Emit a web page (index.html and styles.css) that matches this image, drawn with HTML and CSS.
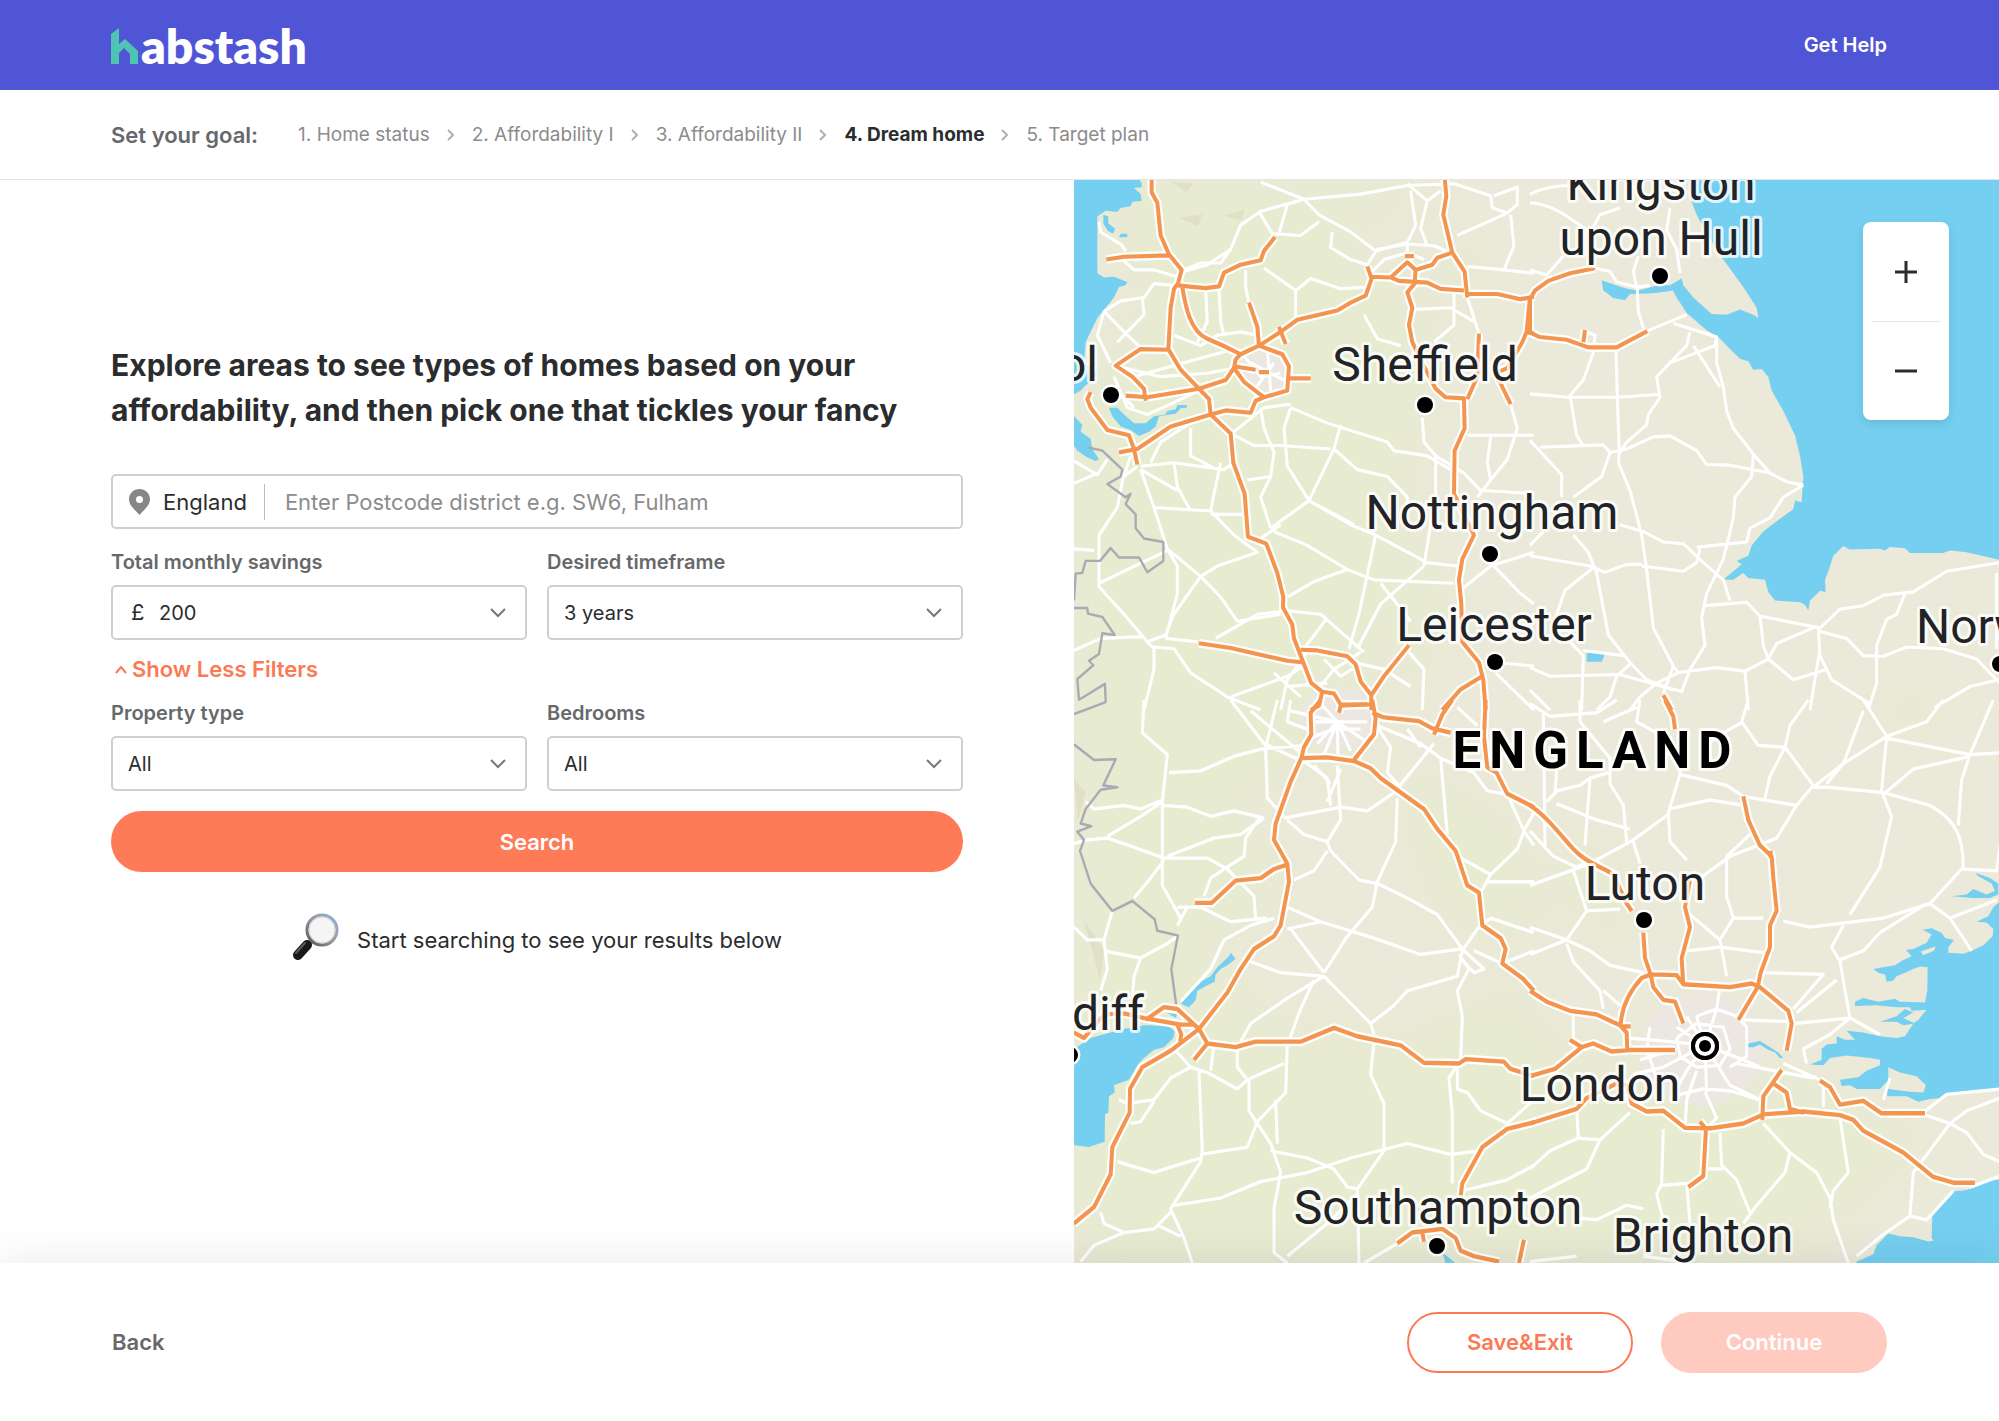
FILE: index.html
```html
<!DOCTYPE html>
<html lang="en">
<head>
	<meta charset="UTF-8">
	<meta name="viewport" content="width=device-width, initial-scale=1.0">
	<title>Habstash - Dream home</title>
	<link rel="stylesheet" href="styles.css">
</head>
<body>
	<header class="header">
		<a href="#" class="logo">
			<svg class="logo-mark" viewBox="0 0 27 36" aria-hidden="true"><path d="M0 6 8 0V16L14 11 27 23V36H19V26L13 20 8 25V36H0Z"/></svg>
			<span>abstash</span>
		</a>
		<a href="#" class="help-link">Get Help</a>
	</header>

	<nav class="steps">
		<span class="steps-title">Set your goal:</span>
		<ol class="steps-list">
			<li><a href="#">1. Home status</a></li>
			<li><svg class="step-arrow" viewBox="0 0 8 14"><path d="M1 2 6 7 1 12"/></svg><a href="#">2. Affordability I</a></li>
			<li><svg class="step-arrow" viewBox="0 0 8 14"><path d="M1 2 6 7 1 12"/></svg><a href="#">3. Affordability II</a></li>
			<li><svg class="step-arrow" viewBox="0 0 8 14"><path d="M1 2 6 7 1 12"/></svg><a href="#" class="active">4. Dream home</a></li>
			<li><svg class="step-arrow" viewBox="0 0 8 14"><path d="M1 2 6 7 1 12"/></svg><a href="#">5. Target plan</a></li>
		</ol>
	</nav>

	<main class="content">
		<section class="search-panel">
			<h1>Explore areas to see types of homes based on your affordability, and then pick one that tickles your fancy</h1>
			<form class="search-form">
				<div class="postcode-box">
					<svg class="pin-icon" viewBox="0 0 21 26"><path fill-rule="evenodd" d="M10.500 0C4.500 0 0 4.500 0 10.300 0 17 6.500 21 10.500 26 14.500 21 21 17 21 10.300 21 4.500 16.500 0 10.500 0ZM10.500 7a3.500 3.500 0 1 1 0 7 3.500 3.500 0 0 1 0-7Z"/></svg>
					<label for="postcode">England</label>
					<input type="text" id="postcode" placeholder="Enter Postcode district e.g. SW6, Fulham">
				</div>

				<div class="field-row">
					<div class="field">
						<label for="savings">Total monthly savings</label>
						<div class="select-box">
							<span class="currency">£</span>
							<select id="savings" class="with-currency"><option>200</option><option>400</option></select>
							<svg class="chevron" viewBox="0 0 16 10"><path d="M1 1 8 8 15 1"/></svg>
						</div>
					</div>
					<div class="field">
						<label for="timeframe">Desired timeframe</label>
						<div class="select-box">
							<select id="timeframe"><option>3 years</option><option>5 years</option></select>
							<svg class="chevron" viewBox="0 0 16 10"><path d="M1 1 8 8 15 1"/></svg>
						</div>
					</div>
				</div>

				<button type="button" class="filter-toggle" id="filter-toggle">
					<svg viewBox="0 0 12 8"><path d="M1 7 6 1 11 7"/></svg>
					<span>Show Less Filters</span>
				</button>

				<div class="field-row">
					<div class="field">
						<label for="property">Property type</label>
						<div class="select-box">
							<select id="property"><option>All</option><option>House</option><option>Flat</option></select>
							<svg class="chevron" viewBox="0 0 16 10"><path d="M1 1 8 8 15 1"/></svg>
						</div>
					</div>
					<div class="field">
						<label for="bedrooms">Bedrooms</label>
						<div class="select-box">
							<select id="bedrooms"><option>All</option><option>1</option><option>2</option></select>
							<svg class="chevron" viewBox="0 0 16 10"><path d="M1 1 8 8 15 1"/></svg>
						</div>
					</div>
				</div>

				<button type="button" class="btn btn-search">Search</button>
			</form>

			<div class="results-hint">
				<svg class="magnifier" viewBox="0 0 48 48">
					<defs>
						<linearGradient id="rim" x1="0" y1="1" x2="1" y2="0"><stop offset="0" stop-color="#555"/><stop offset=".5" stop-color="#98989c"/><stop offset="1" stop-color="#8fb2dc"/></linearGradient>
					</defs>
					<path d="M21 27 17 31" stroke="#8d8d90" stroke-width="5"/>
					<path d="M15 32 6 42" stroke="#17191b" stroke-width="10" stroke-linecap="round"/>
					<path d="M13 30 4 40" stroke="#555b60" stroke-width="2" stroke-linecap="round"/>
					<circle cx="30" cy="17" r="15" fill="#f5f5f6" stroke="url(#rim)" stroke-width="3"/>
					<circle cx="30" cy="17" r="13" fill="none" stroke="#d4d4d8" stroke-width="1"/>
				</svg>
				<p>Start searching to see your results below</p>
			</div>
		</section>

		<section class="map">
			<svg class="map-canvas" viewBox="0 0 925 1083" preserveAspectRatio="xMinYMin slice" role="img" aria-label="Map of England">
				<defs>
					<filter id="soft"><feGaussianBlur stdDeviation="22"/></filter>
					<!-- the four map tiles: water, borders and roads -->
					<g id="water-nw">
						<path d="M0 20H190L203 38V50L180 52 200 70 203 90 175 92 170 105 140 110 130 122 95 118 85 125 70 135V300L90 312 120 310 160 325 155 335 135 340 120 370 95 400 70 430 50 470 35 500 30 560 70 590 60 610 35 625 20 640 0 652Z"/>
						<path d="M105 690H130L150 710 180 735 215 735 240 715 275 710 280 700 305 695 310 682H340L338 690 320 692 305 708 275 712 255 715 245 745 225 760 195 772 170 755 140 745 115 715Z"/>
						<path d="M0 715 25 740 20 760 50 780 55 810 75 840 65 845 40 835 10 815 0 800ZM88 130 103 135V155L123 170 118 185 103 178 88 155ZM140 185H160V195H135Z"/>
					</g>
					<g id="water-ne">
						<path d="M475 20 480 80 500 130 540 200 580 260 640 340 680 400 685 430 670 420 630 405 590 420 545 418 490 370 460 335 455 315 420 335 440 370 470 415 530 465 565 485 600 520 630 548 655 555 670 580 695 578 715 600 725 640 760 700 795 770 810 830 820 890 818 915 815 965 795 960 790 985 740 1020 700 1050 665 1090 655 1120 620 1135 635 1145 580 1190H610L640 1170 655 1185 705 1190 715 1225 735 1250 810 1255 825 1262 835 1278 840 1250 870 1222 887 1225 885 1190 895 1165 910 1120 940 1092 960 1102 1050 1100 1065 1105 1080 1095 1125 1098 1140 1112H1240L1260 1105 1310 1110 1410 1132V20Z"/>
						<path d="M215 320 245 330 290 345 325 350 385 335 420 335 430 350 370 358 300 360 285 378 250 372 220 350ZM170 1402 225 1405 215 1428H170Z"/>
					</g>
					<g id="water-sw">
						<path d="M0 960 50 930 95 918 150 905 210 895 285 897 302 912 298 930 270 955 240 962 210 985 190 1005 165 1045 120 1060 122 1080 105 1090 103 1135 93 1140 92 1215 45 1230 0 1225Z"/>
						<path d="M320 830 345 800 380 775 410 760 430 735 465 705 470 695 485 712 460 730 440 740 425 755 422 775 400 785 370 800 365 825 345 845 325 838ZM280 862 310 864 305 874ZM1105 1520 1120 1530 1145 1550H1115Z"/>
					</g>
					<g id="water-se">
						<path d="M1410 555 1390 570 1375 595 1340 610 1370 612 1390 630 1388 650 1360 675 1325 690 1300 698 1255 695V680L1272 660 1245 655 1235 640 1205 628 1178 632 1205 645 1190 668 1150 685 1128 688 1145 705 1120 715 1095 730 1030 740 1045 750 1065 755 1070 775 1090 772 1100 760 1125 750 1150 740 1170 733 1193 735 1192 800 1185 832 1110 830 1095 822 1045 830 1000 820 975 830V842L1040 840 1100 845 1140 845 1145 855 1190 852 1165 880 1150 890 1125 925 1100 930 1050 925 1000 915 950 910 975 935 945 935 920 925V945L890 948 875 960V990L840 1003 880 1005 900 985 950 978 1020 985 1050 990V1005L1010 1020 985 1038 930 1045 935 1062 960 1060 980 1070H1050L1070 1050 1072 1090 1130 1090 1165 1105 1200 1098 1235 1095 1250 1082 1300 1080 1410 1068Z"/>
						<path d="M1335 475 1380 490 1405 505V535L1380 545H1330L1265 540 1310 535 1330 520 1370 535 1395 525 1385 505 1345 485ZM1050 885 1100 870 1125 850 1150 860 1120 875 1155 890 1120 895 1100 885ZM655 945 690 938 720 955 745 970 760 985H750L735 970 710 960 690 948 670 955H655Z"/>
						<path d="M1410 1320 1370 1322 1350 1335 1310 1348 1270 1352 1230 1395 1207 1420 1205 1480 1212 1487 1195 1490 1150 1478 1110 1475 1075 1468 1040 1500 1030 1525 980 1545V1560H1410Z"/>
						<path class="land" d="M1075 1010 1110 1025 1160 1035 1188 1060 1180 1080 1140 1078 1075 1070ZM1172 692 1217 678 1212 690 1180 702Z"/>
					</g>
					<g id="minor-nw">
						<path d="M560 35 690 85 735 130 830 180 905 235 1000 210M690 85 560 120 500 160 470 230 400 275 330 295M690 85 860 70 1000 45 1140 40 1250 75 1255 110 1300 125 1330 100V50L1260 75M555 120 595 185 680 190 735 150M690 85 640 100 615 185M1000 40 1060 90 1100 60M1010 60 1025 160 1000 210 1000 260M1300 125 1150 190M1310 130 1320 220 1290 290 1180 280M1290 290 1380 300M1060 90 1040 170 1060 220M775 180 770 225 830 260 880 275 910 230 1000 215 1080 220 1130 240M890 300 930 260 1000 240 1050 260"/>
						<path d="M75 150 80 180 140 215 155 235M145 260 180 290 240 290 310 310M330 290 380 270 440 270 470 230M570 285 665 350 710 315 800 345 880 340M665 350V430M515 290V340L525 385M435 345 440 440 450 480M395 345 400 440 370 500M90 410 140 380 210 370 240 330 300 335M90 410 150 470 205 520M90 410 70 480 110 560M205 370 210 420 130 500M130 570 260 600 400 590 480 575M180 600 330 560 480 520M120 600 160 690 220 710 290 680 375 640M130 640 180 690M300 480 380 510 430 480 500 470 550 480"/>
						<path d="M510 540 560 600 620 590M500 590 540 640 600 560M580 520 590 640M530 560 630 610M650 690 760 735 940 790 960 815 1060 830 1130 870M650 680 570 690 480 760M800 740 780 810 705 960 590 1040M780 810 850 870 940 890 1000 950V1000M650 690 630 750 640 860 705 960 830 1030 905 1060 1060 1140 1150 1150M705 960 840 1030M1045 720 1050 790 1085 830V940L1050 1150M480 770 540 800 620 800 770 810M560 690 570 750 600 820 590 890 560 950 590 1040M520 900 590 890"/>
						<path d="M200 860 300 850 450 870 480 850M200 870 240 980 410 990 420 940 440 850M300 850 310 920 350 990M230 850 260 790 340 740M350 750V830L430 870M200 870 310 930M130 980 75 1060V1210L150 1290 220 1370 240 1390V1450L210 1568M410 990 480 1060 550 1110 430 1150 380 1180 300 1290 275 1350 220 1370M410 1000H520M240 980 280 1100 310 1150V1230L275 1360M280 1100 380 1180 440 1240 490 1310 620 1290M75 1200 160 1160 280 1105M0 1100 60 1105M0 1395 80 1360 210 1355M240 1385 300 1390 350 1460 460 1530 560 1568M275 1360 370 1370M150 880 130 980M170 830 150 890 190 860"/>
						<path d="M425 1360 550 1290 640 1280 740 1290 870 1400M600 1050 700 1090 820 1160 900 1190 1140 1200M560 1070 620 1030M640 1240 720 1195 820 1160M905 1060 855 1290 825 1390M1050 1150 920 1260 850 1390M920 1200 1010 1310M690 1390 760 1300M0 845 70 885 100 840M0 910 70 880M1085 830 1170 880 1220 930 1380 940M1180 770H1380M1250 775 1240 850 1250 900 1210 950M1310 680 1330 750 1300 840 1250 900M1250 1150 1380 1110M1250 1150 1160 1220M1260 1150 1340 1230 1380 1260M1265 1460 1380 1568M1265 1430 1380 1440M870 420 910 490 980 510M1015 405 1130 400 1200 440M1140 350V450L1080 500M1180 370 1215 475"/>
						<path d="M470 1530 640 1470 690 1440M1005 1400 1050 1450 1045 1568M840 1430 930 1450 1010 1500M600 1460 680 1530M700 1400 640 1480 620 1568M750 1420 800 1470 850 1440M860 1400 780 1450 730 1510M640 1500 760 1490"/>
					</g>
					<g id="minor-ne">
						<path d="M0 70C40 50 80 45 130 45M0 95C80 100 130 150 180 180M190 165 210 130 270 110M420 110 410 175 440 230 450 300M0 290 50 305 100 250M195 285 240 295 260 325 320 340 360 335M325 250 310 295 322 350 325 410 340 460M350 468 470 420M430 445 560 485 555 510 420 560 380 600 390 660 355 710 350 740 290 790 270 820M480 470 470 510 420 560M490 510 570 630M560 485V560L580 630 590 700 610 750 670 825 720 880 770 905 820 915M170 470 195 480 190 530M0 650 115 660 260 660 385 652M190 530 160 610 120 655 140 770 160 800"/>
						<path d="M258 525 262 660 268 820 265 850 300 930 335 1060 350 1160 370 1330 430 1440 445 1460M30 805 220 798 240 820 290 810 370 775 420 772 500 815 530 855 600 857 720 880M0 785 95 885V950M240 820 215 890 130 950M670 825 665 890 615 950 610 1010 580 1130 530 1230 515 1300 525 1380 480 1450 455 1515M820 915 760 950 720 1010 660 1040 650 1080 500 1095M270 1030 340 1050 400 1080 460 1085 520 1140 580 1190 600 1250M335 1150 460 1165 500 1140 510 1100M335 1145H290L225 1168 180 1150 0 1120M130 1060 175 1110 200 1170 235 1350 300 1430 350 1480 430 1510M190 1155 105 1220 80 1290M0 1090 40 1050"/>
						<path d="M525 1265 650 1255 690 1295 870 1330 930 1275 1000 1265 1060 1235 1150 1225 1250 1165 1410 1140M690 1295 700 1380 715 1420 790 1480 890 1450M860 1325 740 1375 715 1420 645 1455 560 1445 440 1460M645 1455 655 1568M865 1330 870 1410 905 1480 1020 1550M870 1390 840 1568M870 1340 950 1360 1000 1410 1060 1412 1130 1385 1240 1390 1340 1420 1410 1490M1125 1230 1100 1290 1070 1305 1040 1380V1490L1015 1568M1400 1170V1390M1407 1480 1320 1500 1215 1560M0 1445 60 1470 270 1465 380 1495 460 1515M120 1370 160 1410 155 1568M160 1395 280 1410M300 1435 260 1470 240 1530 200 1568M445 1460 380 1490 330 1530 300 1568M0 1510 60 1568M400 1520 430 1440"/>
					</g>
					<g id="minor-sw">
						<path d="M210 0 205 90 280 150 265 280V510L320 600M285 200 380 195 480 155 560 135 690 125M470 0 570 120 700 175 760 215 770 290M610 0 575 130 580 270 630 320M700 160 530 30M35 280 60 300 150 290 200 300 265 275M265 290 340 295 410 320 480 305 570 325M570 325 500 370 420 380 280 430M100 380 180 405 270 435 400 435 460 465 540 540 545 600M100 375 200 320 265 280M0 395 40 385 100 380M560 320 515 380 510 430 450 465 410 490 390 540M270 440 230 490 180 545M630 325 800 295 880 305 960 255 1080 120M790 180 800 330 760 390 770 415 855 495 910 505 1000 545 1090 590 1165 685M640 330 690 370 760 390M760 415 720 470 660 495"/>
						<path d="M970 270 965 390 910 500 895 570 820 650 750 750M640 570 740 610 900 655 1040 700 1165 685M1165 690 1210 630 1250 600 1380 640M1165 690 1150 760 1000 800 960 840 890 890M1165 685 1230 740 1200 750 1160 710M1200 690 1285 725 1380 690M530 720 620 750 750 760 890 890 900 920M750 760 640 820 530 890 500 940M720 770 680 850 640 950 635 1080 550 1160 520 1230 380 1250M310 570 380 570 470 610 580 600M340 570 310 620M115 580 90 660 100 740 80 800M0 625 40 660 90 660M90 690 200 710 280 670 310 650M200 710 180 760 175 820M320 830 410 740 450 660 530 620 600 600M650 630 700 690 750 750M640 630 740 610"/>
						<path d="M300 960 350 1010 400 1025 490 1070 520 1045 630 1000M420 950 410 1020M490 960V1010L525 1050V1130L590 1220 620 1300 600 1400V1520L640 1549M605 1100 610 1220M350 1010 290 1040 240 1100 160 1110 135 1100M240 1105 200 1160 170 1165M375 1020 385 1240 380 1270 290 1400 330 1480 355 1549M130 1270 240 1300 290 1285 380 1260M300 1390 440 1370 560 1325 700 1300 830 1260 1000 1220 1130 1250 1220 1240M590 1240 700 1260 780 1290 820 1340 850 1345 930 1240V1110L890 1030 900 940M850 1345 855 1549M1155 700 1185 740 1150 800 1165 870 1160 990 1125 1040 1135 1140V1330M1150 1000V1070L1180 1080 1220 1130 1300 1165 1380 1100M1165 1350 1300 1320 1380 1280M80 1410 90 1440 150 1465 240 1455 290 1410M150 1465 60 1500 20 1545M250 1445 320 1475"/>
						<path d="M1100 160 1120 370M1150 430 1250 480 1330 410 1350 360 1380 310M1250 480 1220 530M1240 500H1380M1300 260 1350 360 1380 400M1200 200 1240 250 1300 260M900 60 950 130 940 200 980 240M910 70 1040 120 1100 160 1200 200M1150 20 1210 70M1040 130 1000 80M870 1549 980 1490M640 1530 760 1440 850 1360M650 0 640 60 700 80M790 60 730 120M790 60 750 150M790 60 792 150M790 60 830 140M790 60 870 110M790 60 720 60M790 60 880 60M650 30 790 60 740 10M720 100 780 80 860 80M720 180 770 230M800 190 760 280"/>
					</g>
					<g id="minor-se">
						<path d="M0 10 60 45 200 35 260 0M40 30 45 400M150 0V60L240 160V230L280 290 290 390M0 360 70 430 140 460 180 440M50 280 80 250 150 235 180 215 235 200M80 285 200 330 300 355M180 215 165 400M80 190 75 260M655 0 635 60 685 125 765 130 850 235 800 290 740 380 600 430 510 490M835 0 780 70 765 130 720 210 705 270M640 60 560 100 530 130M330 0 320 60 380 90M220 60 320 20M1240 0 1190 60 1070 100 940 175 850 240M1070 100 1000 0M1000 30 940 175 890 230M1070 100 1055 250 1085 320 1050 460 960 590M1070 105 1320 150 1390 0M1320 150 1410 145M1320 150 1295 220 1285 345"/>
						<path d="M850 240 890 240 1060 255 1200 290C1280 330 1300 380 1300 460L1200 560 1060 600 840 625 760 608M1060 260 1150 190 1320 155M1300 465 1400 470 1410 400M450 205 590 235 640 265 800 290M450 205 415 310 420 390 470 440M450 160V205M415 300 540 275 640 290M415 315 310 385 180 450 0 510M310 390 330 450M660 370 590 430V540L610 600 570 660M480 590 570 660 590 760M475 690 570 680 700 695M610 600 700 600M130 470 170 580 110 660 0 625M170 580 270 575M110 660 180 690 240 730 340 750M110 670 130 720 210 800 220 850M0 700 110 660M220 800 270 840M130 860V930M940 620 905 680 930 720 960 875 1050 920M930 715 1000 690 1050 640 1190 560"/>
						<path d="M1200 560 1260 600 1325 690M1260 600 1400 550M790 890 960 875 900 920 820 960 830 1000M700 750 880 755 790 850M920 770 800 860M640 880 780 885M620 1000 850 1040M760 1000 870 1045M465 1180 470 1100 500 1020M530 1180 560 1150 525 1080M400 1180 395 1330 380 1360 400 1430M140 1130 145 1205 210 1210 300 1135M145 1205 60 1240 0 1290M210 1210 170 1290 0 1370M570 1190 575 1280 620 1320 660 1410M530 1290H580M700 1165 780 1245 765 1300 680 1390 640 1440M780 1245 860 1300 900 1370 910 1430 955 1549M930 1150 955 1300 910 1350 900 1400M880 1060V1120M1060 1100 1080 1040M1180 1140 1260 1165 1310 1130 1410 1095M1260 1165 1150 1300 1140 1420 1190 1430 1270 1350M1260 1165 1310 1190 1360 1250 1410 1270M1180 1135 1250 1085 1410 1070M1320 1340 1410 1310M980 1530 1060 1470 1140 1420M140 1425 200 1430 290 1390 340 1400M395 1335 470 1330 480 1440M340 1530 460 1545M0 1545 140 1530"/>
						<path d="M300 930 420 940 525 950 640 990 690 1010M525 950 440 900M525 950 500 870 560 850 570 790M525 950 470 870M525 950 560 850 620 870 650 900V980L600 1010M525 950 400 1010 310 1030M525 950 470 1020 420 1100M525 950 530 1080M525 950 600 1060 690 1100M440 930 450 980 500 1010 570 1005 600 960 580 900 500 890 440 930M360 900 350 960 380 1040M330 990 440 960M430 1090 520 1070 600 1075 690 1100"/>
					</g>
					<g id="border-w">
						<path d="M40 805 85 815 145 870 140 890 100 912 155 950 170 940 155 970 185 1000V1040L210 1070 268 1080V1135L220 1168 195 1125H135L110 1098 78 1135H35L25 1170 5 1172 0 1250M0 1272H40L42 1288 85 1298 122 1350 85 1345 75 1405 45 1425 58 1438 10 1478 15 1538 93 1492 95 1545 0 1580"/>
					</g>
					<g id="border-sw">
						<path d="M0 122 60 165 125 163 88 235 130 240 80 247 35 300 20 340 52 347 10 362 30 385 18 415 50 505 115 580 175 553 242 603 250 635 312 648 292 740 308 848"/>
					</g>
					<g id="major-nw">
						<path d="M233 20V65L250 95 260 190 285 245 323 290 312 330 300 345 290 400 283 520 320 580 375 635 405 665 410 710 470 765 478 850 512 940 522 1065 577 1085 610 1170 628 1240 627 1270 655 1320 660 1360 690 1435 712 1490 745 1515 780 1520 800 1552H890M97 260 150 252 285 248M312 335 340 338 395 343 435 338 450 298 500 275 560 262 570 235 603 195M325 340C335 400 350 470 400 490S460 515 500 535L485 550 480 575 455 610 375 635 220 660 155 655M283 522 200 520 125 568 175 600 210 635 215 670"/>
						<path d="M500 535 555 510 620 470 670 435 790 408 830 385 875 365 893 315 880 280M893 310 950 312 1000 268 1025 290 1075 275 1090 255 1135 240M950 312 975 322 1060 327 1100 345 1170 350M993 250H1020M1112 20 1117 75 1108 130 1135 240 1172 295 1180 370M1175 360H1270L1340 375 1380 368M1368 370 1358 470 1345 500M1358 470 1380 475M1025 290 1022 330 1000 355 1015 400 1005 450 1015 500 1050 570 1085 635 1115 660 1170 663 1172 750 1142 815 1140 940 1200 1060 1165 1130 1155 1190 1162 1260 1165 1370 1215 1430 1228 1480 1235 1568M1215 475 1210 600 1180 665M1345 500 1300 575 1265 590 1310 680"/>
						<path d="M525 385 550 455 555 510 625 535 645 570 640 640 570 660 510 615 480 575M480 570 545 580M555 587H585M640 605H710M615 455 635 505M570 660 545 670 530 705 455 698 410 710 290 745 190 810 135 820M190 855 180 810 165 770 100 755 50 690 40 665 50 645M375 1374 470 1388 640 1425 690 1430M680 1393 730 1395 820 1412 845 1435 860 1485 892 1525V1568M892 1525 930 1470 1005 1380M1225 1470 1160 1508 1105 1568M745 1515 735 1555 710 1568"/>
					</g>
					<g id="major-ne">
						<path d="M0 475V375L15 350 55 322 120 300 195 285M-10 468 30 485 110 493 175 515H260L352 468M165 465 160 500M400 1525 425 1568"/>
					</g>
					<g id="major-sw">
						<path d="M740 0 710 35 712 95 690 130 682 160 650 225 605 340 600 385 640 450 645 500 620 620 600 650 540 685 500 740 460 805 375 905 290 965 205 1010 168 1070 167 1135 115 1230 110 1305 60 1395 0 1440M682 160 760 158 840 168 890 188 920 215 1050 300 1090 355 1145 415 1180 510 1215 530 1225 620 1280 655 1295 685 1285 725 1345 765 1380 800M895 0 905 50 900 95 840 165M795 35 800 15 880 12M895 35 930 48 1035 58 1075 78 1130 90M1135 0 1105 40 1080 95M1235 0 1230 100 1240 185 1268 200 1300 258 1380 295"/>
						<path d="M363 558H413L485 497 560 490 600 465 640 453M360 990 400 945 485 955 545 940H680L780 902 850 925 980 950 1050 998 1155 1000 1175 988 1290 995 1310 1015 1380 1035M400 945 375 905 310 850 270 845 215 880M0 915 30 930 90 865 150 862 210 875 320 893H360M310 893 322 920 318 940M1380 1162 1300 1180 1225 1230 1165 1330 1160 1365M970 1495 1015 1465 1105 1455 1145 1480 1160 1515 1200 1530 1275 1545M1045 1465 1050 1490M1350 1485 1335 1549"/>
					</g>
					<g id="major-se">
						<path d="M405 0 430 45 435 80M0 290C50 320 90 370 130 410S220 460 250 480L290 560 305 580M340 640 345 710 362 755 370 790 400 825 435 830 460 890M640 265 655 330 690 400 725 430 730 490 740 580 720 620V680L692 750 683 790 625 880M722 415V435M480 495 465 570 480 625 455 710 460 785M272 895C275 840 300 800 335 765L362 755 440 757 460 782 600 790 665 780 690 790 775 855 785 890 770 965"/>
						<path d="M0 800 50 830 120 855 200 865 270 895 290 915 292 965M270 898H302M435 963H300L245 967 190 945 155 955 120 935M0 1035 75 1015 155 955M0 1165 140 1125 170 1095 260 1055 290 1060 305 1110 350 1132 400 1130 465 1177 545 1178 640 1165 700 1140 820 1132 930 1142 970 1155 1000 1185 1120 1245 1210 1312 1270 1328H1335M755 1018 700 1090 697 1155M730 1055 770 1080 780 1125 820 1135M870 1047 900 1065 930 1113 1000 1103 1055 1137H1185M510 1160 528 1180 520 1310 475 1340"/>
					</g>
				</defs>

				<rect class="land" width="925" height="1083"/>
				<g class="fields" filter="url(#soft)">
					<path d="M30 0H380L260 60 360 130 340 300 280 480 320 560 160 620 230 720 0 820V240L70 130Z"/>
					<path d="M300 300 380 420 340 520 270 400ZM380 40 420 100 350 120Z"/>
					<path d="M0 820 120 760 200 840 330 860 450 800 480 870 620 900 760 980 700 1083H0V900Z"/>
					<path d="M320 580 440 640 470 760 360 740ZM560 840 640 880 780 920 860 960 740 1060ZM800 520 860 500 850 570ZM520 640 560 780 470 700Z"/>
				</g>
				<path class="hills" d="M98 2 120 4 112 12ZM105 38 128 34 124 46ZM150 36 170 30 168 40ZM0 600 12 612 4 640ZM10 740 30 770 26 800Z"/>
				<g class="town">
					<ellipse cx="263" cy="538" rx="38" ry="32"/>
					<ellipse cx="628" cy="870" rx="62" ry="56"/>
					<ellipse cx="190" cy="192" rx="26" ry="22"/>
				</g>

				<g class="water">
					<use href="#water-nw" transform="translate(0 -10) scale(.3333 .3444)"/>
					<use href="#water-ne" transform="translate(456 -10) scale(.3333 .3444)"/>
					<use href="#water-sw" transform="translate(0 520) scale(.3333 .3635)"/>
					<use href="#water-se" transform="translate(456 520) scale(.3333 .3635)"/>
				</g>
				<g class="minor">
					<use href="#minor-nw" transform="translate(0 -10) scale(.3333 .3444)"/>
					<use href="#minor-ne" transform="translate(456 -10) scale(.3333 .3444)"/>
					<use href="#minor-sw" transform="translate(0 520) scale(.3333 .3635)"/>
					<use href="#minor-se" transform="translate(456 520) scale(.3333 .3635)"/>
				</g>
				<g class="border">
					<use href="#border-w" transform="translate(0 -10) scale(.3333 .3444)"/>
					<use href="#border-sw" transform="translate(0 520) scale(.3333 .3635)"/>
				</g>
				<g class="casing">
					<use href="#major-nw" transform="translate(0 -10) scale(.3333 .3444)"/>
					<use href="#major-ne" transform="translate(456 -10) scale(.3333 .3444)"/>
					<use href="#major-sw" transform="translate(0 520) scale(.3333 .3635)"/>
					<use href="#major-se" transform="translate(456 520) scale(.3333 .3635)"/>
				</g>
				<g class="major">
					<use href="#major-nw" transform="translate(0 -10) scale(.3333 .3444)"/>
					<use href="#major-ne" transform="translate(456 -10) scale(.3333 .3444)"/>
					<use href="#major-sw" transform="translate(0 520) scale(.3333 .3635)"/>
					<use href="#major-se" transform="translate(456 520) scale(.3333 .3635)"/>
				</g>

				<g class="city-dots">
					<circle cx="37" cy="215" r="8"/>
					<circle cx="351" cy="225" r="8"/>
					<circle cx="586" cy="96" r="8"/>
					<circle cx="416" cy="374" r="8"/>
					<circle cx="421" cy="482" r="8"/>
					<circle cx="570" cy="740" r="8"/>
					<circle cx="363" cy="1066" r="8"/>
					<circle cx="926" cy="484" r="8"/>
					<circle cx="-4" cy="875" r="8"/>
				</g>
				<g class="capital">
					<circle cx="631" cy="866" r="14"/>
					<circle class="capital-ring" cx="631" cy="866" r="12"/>
					<circle class="capital-dot" cx="631" cy="866" r="6"/>
				</g>
				<g class="city-names">
					<text x="24" y="201" text-anchor="end">ol</text>
					<text x="351" y="201" text-anchor="middle">Sheffield</text>
					<text x="587" y="20" text-anchor="middle">Kingston</text>
					<text x="587" y="75" text-anchor="middle">upon Hull</text>
					<text x="418" y="349" text-anchor="middle">Nottingham</text>
					<text x="420" y="461" text-anchor="middle">Leicester</text>
					<text x="842" y="463">Norwich</text>
					<text x="571" y="720" text-anchor="middle">Luton</text>
					<text x="70" y="850" text-anchor="end">diff</text>
					<text x="526" y="921" text-anchor="middle">London</text>
					<text x="364" y="1044" text-anchor="middle">Southampton</text>
					<text x="629" y="1072" text-anchor="middle">Brighton</text>
					<text class="country" x="522" y="588" text-anchor="middle">ENGLAND</text>
				</g>
			</svg>
			<div class="zoom-control">
				<button type="button" aria-label="Zoom in"><svg viewBox="0 0 24 24"><path d="M12 1V23M1 12H23"/></svg></button>
				<button type="button" aria-label="Zoom out"><svg viewBox="0 0 24 24"><path d="M1 12H23"/></svg></button>
			</div>
		</section>
	</main>

	<footer class="footer">
		<a href="#" class="back-link">Back</a>
		<div class="footer-actions">
			<button type="button" class="btn btn-outline">Save&amp;Exit</button>
			<button type="button" class="btn btn-continue" disabled>Continue</button>
		</div>
	</footer>
</body>
</html>
```
FILE: styles.css
```css
* {
	box-sizing: border-box;
}

body {
	margin: 0;
	min-height: 100vh;
	display: flex;
	flex-direction: column;
	font-family: Inter, "Liberation Sans", sans-serif;
	color: #2b2c2e;
	background-color: #fff;
}

a {
	color: inherit;
	text-decoration: none;
}

button,
input,
select {
	font-family: inherit;
	color: inherit;
}

.header {
	height: 90px;
	padding: 0 112px 0 111px;
	background-color: #5055d6;
	display: flex;
	justify-content: space-between;
	align-items: center;
}

.logo {
	margin-top: 2px;
	display: flex;
	align-items: flex-end;
	gap: 3px;
	color: #fff;
	font-family: Lato, sans-serif;
	font-size: 48px;
	font-weight: 800;
	line-height: 44px;
}

.logo-mark {
	width: 27px;
	height: 36px;
	margin-bottom: 4px;
	fill: #4fc4b4;
}

.help-link {
	color: #fff;
	font-size: 20px;
	font-weight: 600;
}

.steps {
	height: 90px;
	padding: 0 111px;
	border-bottom: 1px solid #e6e6e6;
	display: flex;
	align-items: center;
	gap: 40px;
}

.steps-title {
	font-size: 22px;
	font-weight: 600;
	color: #66686a;
}

.steps-list {
	list-style: none;
	margin: 0;
	padding: 0;
	display: flex;
	gap: 17px;
	font-size: 19px;
	color: #8c8c8c;
}

.steps-list li {
	display: flex;
	align-items: center;
	gap: 17px;
}

.step-arrow {
	width: 8px;
	height: 14px;
	fill: none;
	stroke: #b0b0b0;
	stroke-width: 2;
}

.steps-list .active {
	color: #2b2c2e;
	font-weight: 700;
}

.content {
	flex: 1;
	display: grid;
	grid-template-columns: 1074fr 925fr;
}

.search-panel {
	padding: 163px 111px 60px;
}

h1 {
	margin: 0 0 41px;
	font-size: 30px;
	font-weight: 700;
	line-height: 45px;
}

.postcode-box {
	height: 55px;
	padding: 0 16px;
	border: 2px solid #cfcfcf;
	border-radius: 5px;
	display: flex;
	align-items: center;
	font-size: 22px;
}

.pin-icon {
	width: 21px;
	height: 26px;
	margin-right: 13px;
	fill: #868686;
}

.postcode-box label {
	padding-right: 17px;
	border-right: 1px solid #bbb;
	line-height: 36px;
}

.postcode-box input {
	flex: 1;
	min-width: 0;
	height: 100%;
	padding: 0 20px;
	border: none;
	outline: none;
	background: none;
	font-size: 22px;
}

.postcode-box input::placeholder {
	color: #8c8c8c;
}

.field-row {
	margin-top: 20px;
	display: grid;
	grid-template-columns: 1fr 1fr;
	gap: 20px;
}

.field label {
	display: block;
	margin-bottom: 10px;
	font-size: 20px;
	font-weight: 600;
	line-height: 26px;
	color: #66686a;
}

.select-box {
	position: relative;
	height: 55px;
	border: 2px solid #cfcfcf;
	border-radius: 5px;
}

.select-box select {
	width: 100%;
	height: 100%;
	padding: 0 50px 0 15px;
	border: none;
	background: none;
	appearance: none;
	font-size: 20px;
}

.select-box .with-currency {
	padding-left: 46px;
}

.currency {
	position: absolute;
	left: 18px;
	line-height: 51px;
	font-size: 22px;
}

.chevron {
	position: absolute;
	right: 19px;
	top: 21px;
	width: 16px;
	height: 10px;
	fill: none;
	stroke: #777;
	stroke-width: 2;
	pointer-events: none;
}

.filter-toggle {
	margin-top: 16px;
	padding: 0 4px;
	border: none;
	background: none;
	display: flex;
	align-items: center;
	gap: 5px;
	color: #fb7a56;
	font-size: 22px;
	font-weight: 600;
	line-height: 27px;
	cursor: pointer;
}

.filter-toggle svg {
	width: 12px;
	height: 8px;
	fill: none;
	stroke: currentColor;
	stroke-width: 2;
}

.filter-toggle + .field-row {
	margin-top: 17px;
}

.btn {
	height: 61px;
	border: none;
	border-radius: 31px;
	font-size: 22px;
	font-weight: 600;
	cursor: pointer;
}

.btn-search {
	width: 100%;
	margin-top: 20px;
	background-color: #ff7b57;
	color: #fff;
}

.results-hint {
	margin-top: 41px;
	display: flex;
	justify-content: center;
	align-items: flex-end;
	gap: 17px;
	font-size: 22px;
}

.results-hint p {
	margin: 0;
	line-height: 42px;
}

.magnifier {
	width: 48px;
	height: 48px;
	fill: none;
}

/* Map */
.map {
	position: relative;
	overflow: hidden;
}

.map-canvas {
	position: absolute;
	width: 100%;
	height: 100%;
}

.land {
	fill: #ebe9d9;
}

.fields {
	fill: #e7ebd0;
}

.hills {
	fill: #dfe0c6;
}

.town {
	fill: #ece7e1;
}

.water {
	fill: #75cff0;
}

.minor,
.border,
.casing,
.major {
	fill: none;
	stroke-linejoin: round;
}

.minor {
	stroke: #fff;
	stroke-width: 9;
}

.border {
	stroke: #aaa9b4;
	stroke-width: 7;
}

.casing {
	stroke: #fff;
	stroke-width: 25;
}

.major {
	stroke: #f4954f;
	stroke-width: 12;
}

.city-dots,
.capital {
	fill: #000;
	stroke: #fff;
	stroke-width: 5;
	paint-order: stroke;
}

.capital-ring {
	fill: #fff;
	stroke: #000;
	stroke-width: 4;
	paint-order: normal;
}

.capital-dot {
	stroke: none;
}

.city-names {
	font-family: Roboto, sans-serif;
	font-size: 48px;
	fill: #222326;
	stroke: #fff;
	stroke-width: 6;
	stroke-opacity: .8;
	stroke-linejoin: round;
	paint-order: stroke;
}

.city-names .country {
	font-size: 51px;
	font-weight: 700;
	letter-spacing: 8px;
	fill: #000;
}

.zoom-control {
	position: absolute;
	top: 42px;
	right: 50px;
	width: 86px;
	padding: 0 8px;
	border-radius: 8px;
	background-color: #fff;
	box-shadow: 0 4px 10px rgba(0, 0, 0, .1);
}

.zoom-control button {
	width: 100%;
	height: 99px;
	padding: 0;
	border: none;
	background: none;
	cursor: pointer;
}

.zoom-control button + button {
	border-top: 1px solid #e8e8e8;
}

.zoom-control svg {
	width: 24px;
	height: 24px;
	vertical-align: middle;
	stroke: #2b2c2e;
	stroke-width: 3;
}

.footer {
	position: relative;
	height: 158px;
	padding: 0 112px;
	background-color: #fff;
	box-shadow: 0 -4px 40px rgba(0, 0, 0, .08);
	display: flex;
	justify-content: space-between;
	align-items: center;
}

.back-link {
	font-size: 22px;
	font-weight: 600;
	color: #66686a;
}

.footer-actions {
	display: flex;
	gap: 28px;
}

.footer-actions .btn {
	width: 226px;
}

.btn-outline {
	border: 2px solid #fb7a56;
	background-color: #fff;
	color: #fb7a56;
}

.btn-continue {
	background-color: #ffcbc0;
	color: #fff;
	cursor: default;
}
```
